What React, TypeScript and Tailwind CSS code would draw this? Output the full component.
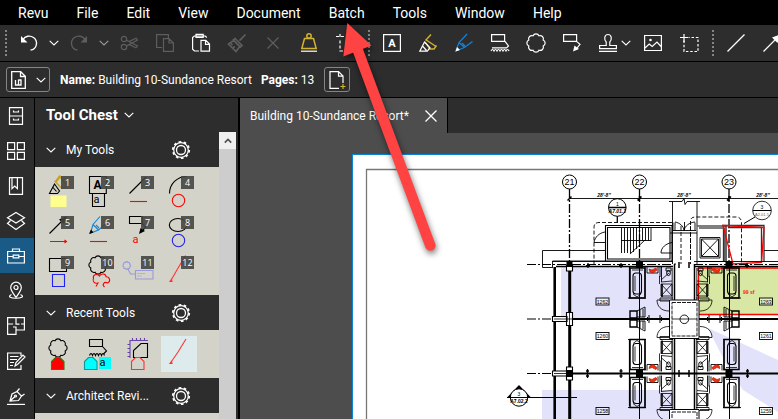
import { useState, type ReactNode } from 'react';

const menus = ['Revu', 'File', 'Edit', 'View', 'Document', 'Batch', 'Tools', 'Window', 'Help'];

// Scalloped outline around a centre point
const cloudPath = (cx: number, cy: number, r: number, n = 8) => {
  const pts = Array.from({ length: n }, (_, i) => {
    const a = (Math.PI * 2 * (i + 0.5)) / n;
    return [cx + r * Math.cos(a), cy + r * Math.sin(a)];
  });
  const bump = r * 0.42;
  return (
    `M${pts[0][0]} ${pts[0][1]}` +
    [...pts.slice(1), pts[0]].map(([x, y]) => `A${bump} ${bump} 0 0 1 ${x} ${y}`).join('') +
    'Z'
  );
};

function Icon({ children, className = '' }: { children: ReactNode; className?: string }) {
  return (
    <svg
      viewBox="0 0 18 18"
      className={`h-[18px] w-[18px] shrink-0 overflow-visible ${className}`}
      fill="none"
      stroke="currentColor"
      strokeWidth="1.2"
      aria-hidden="true"
    >
      {children}
    </svg>
  );
}

function Chevron({ className = '' }: { className?: string }) {
  return (
    <svg viewBox="0 0 10 6" className={`h-[6px] w-[10px] shrink-0 ${className}`} fill="none" stroke="currentColor" aria-hidden="true">
      <path d="M.7.8 5 5 9.3.8" strokeWidth="1.1" />
    </svg>
  );
}

function Grip() {
  return (
    <div className="flex w-[11px] shrink-0 justify-center">
      <div className="h-[26px] border-l-2 border-dotted border-[#858585]" />
    </div>
  );
}

function ToolButton({ label, children, className = 'text-white' }: { label: string; children: ReactNode; className?: string }) {
  return (
    <button type="button" aria-label={label} className={`flex h-9 w-9 shrink-0 items-center justify-center ${className}`}>
      <Icon>{children}</Icon>
    </button>
  );
}

function DropButton({ label, className = 'text-white' }: { label: string; className?: string }) {
  return (
    <button type="button" aria-label={label} className={`flex h-9 w-[14px] shrink-0 items-center justify-center ${className}`}>
      <Chevron />
    </button>
  );
}

function MenuBar() {
  return (
    <nav className="flex h-[25px] shrink-0 items-center bg-black px-1 pt-[1px] text-[14px]">
      {menus.map((menu) => (
        <button key={menu} type="button" className="h-full px-[14px]">
          {menu}
        </button>
      ))}
    </nav>
  );
}

function Toolbar() {
  return (
    <div className="flex h-[37px] shrink-0 items-center overflow-hidden border-b border-black bg-[#2d2d2d]">
      <Grip />
      <ToolButton label="Undo">
        <path d="M3 5.5C5 2 10 1 13.5 3.5 18.5 7 17 15.500 10.500 16.200" strokeWidth="1.3" />
        <path d="M1 2v6.500h6.500z" fill="currentColor" stroke="none" />
      </ToolButton>
      <DropButton label="Undo history" />
      <ToolButton label="Redo" className="text-[#5e5e5e]">
        <path d="M15 5.500C13 2 8 1 4.500 3.500-.5 7 1 15.500 7.500 16.200" strokeWidth="1.3" />
        <path d="M17 2v6.500h-6.500z" fill="currentColor" stroke="none" />
      </ToolButton>
      <DropButton label="Redo history" className="text-[#9a9a9a]" />
      <ToolButton label="Cut" className="text-[#5e5e5e]">
        <circle cx="4" cy="5" r="2.700" />
        <circle cx="4" cy="13" r="2.700" />
        <path d="M6.500 6.200 17.500 12l-1.500 1.800L9 10.500 6.500 12M6.500 12 17.500 6 16 4.200 9 7.600" />
      </ToolButton>
      <ToolButton label="Copy" className="text-[#5e5e5e]">
        <path d="M6 13.500H.6V.6h11.800v4M7.500 4.600h5.500l4.400 4.400v8.400H7.500zM13 4.600V9h4.400" />
      </ToolButton>
      <ToolButton label="Paste">
        <path d="M7 17H2.500L.6 15.200V3.500L2.300 2h10.900l1.600 1.500M4 2V.4h7.200v3H4V2M9 6.300h4.800l3.700 3.800v7H9zM13.500 6.300v4h4" />
      </ToolButton>
      <ToolButton label="Format painter" className="text-[#5e5e5e]">
        <path d="m17.500.5-6 6.200M7 4.500l7 7-1.700 1.500-7-7zM5.500 6.500.5 10l7.500 7.500 3.800-5M3 9.500l1.500 1.500M5 14l1.700-1.700" strokeWidth="1.700" />
      </ToolButton>
      <ToolButton label="Delete" className="text-[#5e5e5e]">
        <path d="m3.500 3.500 11 11M14.500 3.500l-11 11" />
      </ToolButton>
      <ToolButton label="Flatten" className="text-[#d2b42c]">
        <path d="M4.500 4.500h9l2.700 10H1.800z" strokeWidth="1.500" />
        <circle cx="9" cy="2" r="2.200" strokeWidth="1.500" />
        <path d="M1 17.200h16" stroke="#fff" />
      </ToolButton>
      <ToolButton label="Crop">
        <path d="M0 2.500h8M4 0v5M4 6.500v11M4 17h12.500V3H8" strokeDasharray="3 2" />
      </ToolButton>
      <Grip />
      <ToolButton label="Text box">
        <path d="M.6.600h16.800v16.800H.6z" />
        <text x="9" y="13" textAnchor="middle" fontSize="11" fontWeight="700" fill="currentColor" stroke="none">A</text>
      </ToolButton>
      <ToolButton label="Highlight" className="text-[#d2b42c]">
        <path d="M12 .5 6.500 6.500M6.500 5.500l10.500 7M17.500 11.500l-2.500 3.500h-4L6 8" strokeWidth="1.400" />
        <path d="M5.500 8 .8 17.200h7.500l2.700-3.500zM3.500 12l4 4.500" stroke="#fff" />
      </ToolButton>
      <ToolButton label="Pen" className="text-[#1583d8]">
        <path d="M12 0 4 8.500.8 17l8.700-3.500 8-6M4 8.500l5.500 5M7 9l3 3" />
        <path d="m2 13-1.500 4.500L5 16z" fill="#fff" stroke="none" />
      </ToolButton>
      <ToolButton label="Typewriter note">
        <path d="M.6.600h13v6.800H.6zM14 7.400l3.500 4.500-2 2H1" />
        <path d="M0 17q1.500-3 3 0 1.500-3 3 0 1.500-3 3 0 1.500-3 3 0 1.500-3 3 0 1.500-3 3 0" />
      </ToolButton>
      <ToolButton label="Cloud">
        <path d={cloudPath(9, 9, 7.8)} />
      </ToolButton>
      <ToolButton label="Callout">
        <path d="M.6.600h13v6.800H.6zM13.500 7.400l3.500 3-4 5" />
        <path d="m10 17.500 1.500-6 4.500 3.500z" fill="currentColor" stroke="none" />
      </ToolButton>
      <button type="button" aria-label="Stamp" className="flex h-9 w-[45px] shrink-0 items-center gap-1 pl-[9px]">
        <Icon>
          <path d="M7.200 11.500V8C5 6 5 .5 9 .5S13 6 10.800 8v3.500h6.600v3.200H.6v-3.200zM0 17.300h18" />
        </Icon>
        <Chevron />
      </button>
      <ToolButton label="Image">
        <path d="M.6 1.500h16.800v15H.6zM1 14l4.200-4 3 2.500L13 8l4.500 5" />
        <circle cx="6.500" cy="6" r="1.300" fill="currentColor" stroke="none" />
      </ToolButton>
      <ToolButton label="Snapshot">
        <path d="M4 6.500v11h14V3.500H9" strokeDasharray="2.500 1.800" />
        <path d="M0 3.500h8.500M4 0v8" />
      </ToolButton>
      <Grip />
      <ToolButton label="Line">
        <path d="M.5 17.500 17.500.5" />
      </ToolButton>
      <ToolButton label="Arrow">
        <path d="M.5 17.500 15 3" />
        <path d="m18 0-9 3.500 5.500 5.500z" fill="currentColor" stroke="none" />
      </ToolButton>
    </div>
  );
}

function DocumentBar() {
  return (
    <div className="flex h-9 shrink-0 items-center border-b border-black bg-[#2d2d2d] px-[6px] text-[12px]">
      <button type="button" aria-label="Document menu" className="flex h-[25px] w-11 items-center gap-[10px] rounded-[3px] border border-[#858585] pl-1">
        <svg viewBox="0 0 15 18" className="h-[18px] w-[15px]" fill="none" stroke="currentColor" strokeWidth="1.3" aria-hidden="true">
          <path d="M.7.7h9l4.600 4.600v12H.7zM9.500 1v4.500H14" />
          <path d="M4.500 9v5h3V8.500M7.500 14H10V9H7.500" />
        </svg>
        <Chevron />
      </button>
      <p className="ml-[10px] whitespace-nowrap">
        <strong>Name:</strong> Building 10-Sundance Resort
      </p>
      <p className="ml-[9px] whitespace-nowrap">
        <strong>Pages:</strong> 13
      </p>
      <button type="button" aria-label="Add page" className="ml-[10px] flex h-[25px] w-[26px] items-center justify-center rounded-[3px] border border-[#858585]">
        <svg viewBox="0 0 17 18" className="h-[18px] w-[17px]" fill="none" stroke="currentColor" strokeWidth="1.2" aria-hidden="true">
          <path d="M10 17.400H1V.6h8.500L14 5v7M9.500.8V5.200H14" />
          <path d="M14 13v5M11.500 15.500h5" stroke="#d2b42c" />
        </svg>
      </button>
    </div>
  );
}

const railItems = [
  {
    label: 'File Access',
    icon: <path d="M2.500.6h13v16.800h-13zM2.500 9h13M6.500 3.500v1.500h5V3.500M6.500 11.500V13h5v-1.500" />
  },
  {
    label: 'Thumbnails',
    icon: <path d="M.6.600h7v7h-7zM10.400.6h7v7h-7zM.6 10.400h7v7h-7zM10.400 10.400h7v7h-7z" />
  },
  {
    label: 'Bookmarks',
    icon: <path d="M2.500.6h13v16.800h-13zM5 .6v11l2.700-2.500 2.700 2.500V.6" />
  },
  {
    label: 'Layers',
    icon: <path d="m9 .5 8.500 5.300L9 11 .5 5.800zM3.500 8.500.5 11.500 9 17.500l8.500-6-3-3" />
  },
  {
    label: 'Tool Chest',
    icon: <path d="M.6 4.500h16.800v11.500H.6zM5.500 4.500V2h7v2.500M.6 9.500h5.500M11.900 9.500h5.500M6.200 8.200h5.600v2.600H6.200z" />
  },
  {
    label: 'Places',
    icon: (
      <>
        <path d="M9 15.500C6 11 3.700 8.500 3.700 5.500a5.300 5.300 0 0 1 10.600 0C14.300 8.500 12 11 9 15.500z" />
        <circle cx="9" cy="5.500" r="2" />
        <path d="M4.500 12.500C-5 17.500 23 17.500 13.500 12.500" />
      </>
    )
  },
  {
    label: 'Spaces',
    icon: <path d="M.6.600h16.800V13H9v4.400H.6zM.6 7h5.500M9 .6v6.500h3.500M9 13v-3H6M14 7h3.500" />
  },
  {
    label: 'Markups List',
    icon: <path d="M14 4V1H.6v16.400H14V13M3 4.500h8.500M3 7.500h7M3 10.500h4M3 13.500h3M8 14l1-3.500L16 3l2 2-7.500 7.500z" />
  },
  {
    label: 'Signatures',
    icon: (
      <>
        <path d="M3 14 5 7l5-2.500 4.500 4.500-3 4.500zM3 14l5-4.500M9.500 5l3-3.500M14 9.500 17.500 7" />
        <circle cx="8.500" cy="9" r="1" />
        <path d="M0 17.400h18" />
      </>
    )
  }
];

function Rail() {
  return (
    <nav aria-label="Panels" className="flex w-[34px] shrink-0 flex-col bg-[#2d2d2d]">
      {railItems.map(({ label, icon }) => (
        <button
          key={label}
          type="button"
          aria-label={label}
          className={`flex h-[35px] w-full shrink-0 items-center justify-center pr-[2px] ${label === 'Tool Chest' ? 'bg-[#195a87]' : ''}`}
        >
          <Icon>{icon}</Icon>
        </button>
      ))}
    </nav>
  );
}

function Gear() {
  return (
    <svg viewBox="0 0 20 20" className="h-5 w-5" fill="none" stroke="currentColor" aria-hidden="true">
      <circle cx="10" cy="10" r="7.300" strokeWidth="1.200" />
      <circle cx="10" cy="10" r="8.200" strokeWidth="1.800" strokeDasharray="2.576 2.576" />
      <circle cx="10" cy="10" r="4.500" strokeWidth="1.300" />
    </svg>
  );
}

const house = (x: number, y: number) => `M${x} ${y + 12}v-8l4-4h4.500l4 4v8z`;

const myTools = [
  {
    label: 'Yellow highlight',
    art: (
      <>
        <path d="m22 5-5 6M15.500 10l7 7M22.500 17l4.500-1M16 11l4.500-6 6 8" stroke="#c9a21e" strokeWidth="1.300" />
        <path d="m15.500 13-5 9.500h8l2-2.500zM14 16.500l3.500 4" />
        <path d="M11.500 24.500H27.500v11.500h-16z" fill="#ffff8f" stroke="none" />
      </>
    )
  },
  {
    label: 'Text box',
    art: (
      <>
        <path d="M10.500 5.500h16.800v17H10.500zM13.500 22.500h12v13h-12z" />
        <text x="18.500" y="17.500" textAnchor="middle" fontSize="12" fontWeight="700" fill="#000" stroke="none">A</text>
        <text x="14.500" y="32" fontSize="11" fill="#000" stroke="none">a</text>
      </>
    )
  },
  {
    label: 'Line',
    art: (
      <>
        <path d="M10.500 22.500 27 6" />
        <path d="M11 30.500h17" stroke="#f00" />
      </>
    )
  },
  {
    label: 'Arc',
    art: (
      <>
        <path d="M10.500 22.500A17 17 0 0 1 27.500 5.500" />
        <circle cx="19.500" cy="29.500" r="6.200" stroke="#f00" />
      </>
    )
  },
  {
    label: 'Arrow',
    art: (
      <>
        <path d="m10.500 22.500 14-14" />
        <path d="m28 5-8 3.500 5 4.500z" fill="#000" stroke="none" />
        <path d="M11 30.500h16M25.500 29l2 1.500-2 1.500" stroke="#f00" />
      </>
    )
  },
  {
    label: 'Pen',
    art: (
      <>
        <path d="m21 5.500-7 8L11.500 22l8-3 8-7M14 13.500l5.500 5.500M17 14l3 3" stroke="#1583d8" />
        <path d="m12 18.500-2 4.500 4.500-1.500z" fill="#000" stroke="none" />
        <path d="M11 30.500h17" stroke="#f00" />
      </>
    )
  },
  {
    label: 'Callout',
    art: (
      <>
        <path d="M10.500 5.500h13v7h-13zM23.500 12.500l3 4-3 3" />
        <path d="m20 23 1.500-6 4.500 3z" fill="#000" stroke="none" />
        <text x="13.500" y="32" fontSize="11" fill="#f00" stroke="none">a</text>
      </>
    )
  },
  {
    label: 'Ellipse',
    art: (
      <>
        <ellipse cx="19" cy="14" rx="8.700" ry="6.500" />
        <circle cx="19.500" cy="29.500" r="6.200" stroke="#2222f0" />
      </>
    )
  },
  {
    label: 'Rectangle',
    art: (
      <>
        <path d="M10.500 7.500h17v13h-17z" />
        <path d="M13.500 23.500h12v12h-12z" stroke="#2222f0" />
      </>
    )
  },
  {
    label: 'Cloud',
    art: (
      <>
        <path d={cloudPath(19, 14, 7.8)} />
        <path d="M17 35.500l2-3.500c-3.500 1-6-2-4.500-4.500-1-3.500 3-5.500 6-2.500 1.500-3 6.500-2.500 6.500.8 4 0 5 5 1.500 6.200M28.500 32c-3-2-6 1.500-3 4" stroke="#f00" />
      </>
    )
  },
  {
    label: 'Cloud note',
    art: (
      <g stroke="#9a9ade">
        <path d={cloudPath(7.7, 14.5, 3.3)} />
        <path d="m9 18 2.500 5h5M16.500 19.500H34V28H16.500z" />
        <path d="M18.500 22.500h8M18.500 25h4" strokeDasharray="2 .7" strokeWidth=".8" />
      </g>
    )
  },
  {
    label: 'Polyline',
    art: <path d="M26.500 4.500 18.500 18l-6 10.500.5 2h-2l2-3" stroke="#f33" />
  }
];

const recentTools = [
  {
    label: 'Red cloud',
    art: (
      <>
        <path d={cloudPath(19, 14, 7.8)} />
        <path d={house(12.5, 23.5)} fill="#f00" stroke="#37780e" />
      </>
    )
  },
  {
    label: 'Cyan note',
    art: (
      <>
        <path d="M10.500 5.500h13v7h-13zM23.500 12.500l4 4.500-3 3" />
        <path d="M10.500 21.500q1.500-4 3 0 1.500-4 3 0 1.500-4 3 0 1.500-4 3 0 1.500-4 3 0" />
        <path d={house(5.5, 23.5)} fill="#0ff" stroke="#0a9a9a" />
        <path d="M20 23h12v12H20z" fill="#0ff" stroke="none" />
        <text x="20.500" y="32" fontSize="11" fill="#000" stroke="none">a</text>
      </>
    )
  },
  {
    label: 'Area measurement',
    art: (
      <>
        <path d="M11 24V6.500H29M8.500 10.500H11M8.500 14.500H11M8.500 18.500H11M8.500 22.500H11M13.500 4v2.500M17.500 4v2.500M21.500 4v2.500M25.500 4v2.500" stroke="#6842a8" />
        <path d="M14.500 23.500v-7l7.500-7h6.500v14z" />
        <path d={house(12.5, 23.5)} stroke="#f33" />
      </>
    )
  },
  {
    label: 'Polyline',
    art: <path d="M27 5 19 18l-6.500 9.500.5 2h-2l2-3" stroke="#f33" />
  }
];

function ToolCell({ label, art, badge, selected }: { label: string; art: ReactNode; badge?: number; selected?: boolean }) {
  return (
    <button type="button" aria-label={label} className="relative flex h-10 w-10 items-center justify-center">
      {selected && <span className="absolute inset-[2px] bg-[#deebec]" />}
      <svg viewBox="0 0 40 40" className="relative h-10 w-10" fill="none" stroke="#000" strokeWidth="1.100" aria-hidden="true">
        {art}
      </svg>
      {badge && (
        <span className="absolute top-[5px] left-[22px] h-[13px] w-[13px] bg-[#454541]/90 text-center font-['Open_Sans',sans-serif] text-[9px] leading-[13px] text-white">
          <span className="-mx-1">{badge}</span>
        </span>
      )}
    </button>
  );
}

function ToolSection({ title, children }: { title: string; children?: ReactNode }) {
  const [open, setOpen] = useState(true);

  return (
    <section>
      <div className="flex h-[35px] items-center justify-between bg-[#2d2d2d] pr-7 pl-[11px]">
        <button type="button" aria-expanded={open} onClick={() => setOpen(!open)} className="flex items-center gap-[10px] text-[12px]">
          <Chevron className={open ? '' : '-rotate-90'} />
          {title}
        </button>
        <button type="button" aria-label={`${title} settings`}>
          <Gear />
        </button>
      </div>
      {open && <div className="grid min-h-12 grid-cols-[repeat(4,40px)] bg-[#d3d3c9] p-1">{children}</div>}
    </section>
  );
}

function ToolChest() {
  return (
    <aside className="flex w-[206px] shrink-0 flex-col border-r-2 border-l border-black bg-[#2d2d2d]">
      <div className="flex h-[34px] shrink-0 items-center gap-[6px] pl-[11px]">
        <h1 className="text-[15px] font-bold">Tool Chest</h1>
        <Chevron />
      </div>
      <div className="flex min-h-0 flex-1 pr-[2px]">
        <div className="min-w-0 flex-1 overflow-hidden">
          <ToolSection title="My Tools">
            {myTools.map((tool, index) => (
              <ToolCell key={tool.label} label={tool.label} art={tool.art} badge={index + 1} />
            ))}
          </ToolSection>
          <ToolSection title="Recent Tools">
            {recentTools.map((tool, index) => (
              <ToolCell key={tool.label} label={tool.label} art={tool.art} selected={index === 3} />
            ))}
          </ToolSection>
          <ToolSection title="Architect Revi..." />
        </div>
        <div className="w-[17px] bg-[#cdcdcd]">
          <button type="button" aria-label="Scroll up" className="flex h-[17px] w-full items-center justify-center bg-[#f0f0f0] text-[#505050]">
            <svg viewBox="0 0 10 6" className="h-[6px] w-[8px]" fill="none" stroke="currentColor" strokeWidth="2" aria-hidden="true">
              <path d="m1 5 4-4 4 4" />
            </svg>
          </button>
        </div>
      </div>
    </aside>
  );
}

// Guest bathroom, drawn leftwards from the corridor wall and down from the party wall
function Bathroom({ transform }: { transform: string }) {
  return (
    <g transform={transform} fill="none" stroke="#000">
      <path d="M-44 4v30h15V4z" strokeWidth="1.500" />
      <rect x="-41" y="9" width="8.500" height="21" rx="3" strokeWidth="1.100" />
      <path d="M-42 6h11M-39 12v15M-34.500 12v15M-41 30l4 3 4-3" strokeWidth=".8" />
      <path d="M-29 3v30M-27 3v6h11V3M-12.500 2v16M-14 34h13M-14 2v11M-46 34h18" strokeWidth=".9" />
      <path d="M-13 20h11v12h-11zM-13 20l11 12M-13 32-2 20" strokeWidth=".8" />
      <path d="m-13 16 8-7M-13 18l11-1M-14.500 12v8" strokeWidth=".8" />
      <ellipse cx="-5.500" cy="9" rx="1.800" ry="2.600" />
      <path d="M-8 4h5v3h-5z" strokeWidth=".9" />
      <path d="M-12 20v13" strokeWidth="1.600" />
      <path d="M-5 36h-12c0 6 4 11 12 11M-14 34v3h10" strokeWidth=".8" />
      <path d="m-25 5 3 1 4-2 1 2-4 3-3-1z" fill="#f03010" stroke="#c01800" strokeWidth=".7" />
    </g>
  );
}

// Back-to-back wardrobes on the party wall between two rooms
function Wardrobes({ transform }: { transform: string }) {
  return (
    <g transform={transform} fill="none" stroke="#000">
      <path d="M-44-8v7h7v-7zM-44 1v7h7V1z" strokeWidth="1.400" />
      <path d="m-37-8 8-4v10h-8M-37 8l8 4V2h-8M-34-9v7M-31-10v8M-34 9V2M-31 10V2" strokeWidth=".9" />
      <path d="M-25-4v8M-26.500-2v4M-14-4v8M-12.500-2v4" />
    </g>
  );
}

const roomLabels = [
  { x: 602.5, y: 301.5, text: '1262' },
  { x: 602.5, y: 336, text: '1260' },
  { x: 602.5, y: 411, text: '1258' },
  { x: 766, y: 301.5, text: '1263' },
  { x: 766, y: 336, text: '1261' },
  { x: 766, y: 411, text: '1259' }
];

function FloorPlan() {
  return (
    <svg
      viewBox="353 155 425 264"
      preserveAspectRatio="xMinYMin slice"
      className="block h-full w-full font-['Liberation_Sans',sans-serif]"
      fill="none"
      stroke="#000"
      role="img"
      aria-label="Floor plan"
    >
      <path d="M366.500 500V169.500H1200" stroke="#777" strokeWidth="1.300" />

      {/* tinted rooms */}
      <g stroke="none" fill="#e2e2fb">
        <path d="M561 267h112v52H561zM542 390h132v110H542zM708 328l70 32v52l-35-22-16-24z" />
      </g>
      <path d="M698.500 268H900v46.500H698.500z" fill="#d8e8a4" stroke="#f00" strokeWidth="1.300" />

      {/* column grid */}
      <g strokeWidth=".9">
        <path d="M569.500 189v72M639.500 189v76M729 189v76" strokeWidth="1.300" strokeDasharray="9 2 2 2" />
        <path d="M569 198.500H1000" />
        <path d="m567.500 200.500 4-4M637.500 200.500l4-4M727 200.500l4-4M639.500 196v5M729 196v5" strokeWidth="1.500" />
      </g>
      {[['21', 569.5], ['22', 639.5], ['23', 729]].map(([name, x]) => (
        <g key={name}>
          <circle cx={x} cy="182" r="7" fill="#fff" />
          <text x={x} y="185.200" textAnchor="middle" fontSize="9" fill="#000" stroke="none">{name}</text>
        </g>
      ))}
      <g fontSize="5" fontStyle="italic" fontWeight="700" fill="#000" stroke="none" textAnchor="middle">
        <text x="604" y="197">28'-8"</text>
        <text x="684" y="197">28'-8"</text>
        <text x="763" y="197">28'-8"</text>
      </g>

      {/* section markers */}
      <circle cx="617.300" cy="207.500" r="8.800" />
      <path d="M608.500 207.500h17.600M617.300 216.300v6" strokeWidth="1.300" />
      <circle cx="762" cy="210.500" r="9.300" stroke="#333" />
      <path d="M752.700 210.500h18.600M755 217l-11 6.500" />
      <g fill="#000" stroke="none" textAnchor="middle" fontSize="5">
        <text x="617.300" y="205.500">1</text>
        <text x="617.300" y="213" fontWeight="700" fontStyle="italic">A7.01.1</text>
        <text x="762" y="208.500">3</text>
        <text x="762" y="216" fill="#666" fontSize="4">A2.01.5</text>
      </g>
      <path d="M672 222.500h-73q-5 0-5 5V264M676 264h-2M690.500 255v-34q0-4 5-4H736q5.500 0 5.500 6v41M681 226v38M690.500 226v38" strokeWidth=".9" strokeDasharray="4 2" />

      {/* stair core */}
      <path d="M605.500 225.500H672v35.500h-66.500zM607.500 227.500H670v31.500h-62.500z" strokeWidth="1.100" />
      <path d="M621.500 228v25M624.500 228v25M627.500 228v25M630.500 228v25M633.500 228v24M636.500 228v21M639.500 228v18M642.500 228v13M645.500 228v13M648.500 228v13M651 228v13M621 240.500h30M630 254l15-14" strokeWidth=".9" />
      <path d="M605 232c-6 1-10 5-11 10.500h11M672 242.500c-6 1-11 5-11 10.500h11" strokeWidth=".9" />

      {/* lobby */}
      <path d="M672.500 201.500V264M697 201.500V264M669 201.500h13l2-3 1 6 2-3h13M673 222.500v8M695 222.500v8M673 230.500h23M675 222.500v8M684.500 222v8.500M675 222c5 1 8.500 4 9 8.500 1-4.500 5-8 11-8.500M670 233h27" strokeWidth=".9" />
      <path d="M697.500 226H726M699 228h25v33M697.500 261.500h30M726 226v35" strokeWidth="1.200" />
      <path d="M700 237.500h20V258h-20zM701.500 239h17v17.500h-17zM701.500 239l17 17.500M718.500 239l-17 17.500" strokeWidth=".9" />
      <path d="M722 225.500h42V262M728 227.500h33.500V262M723.500 226v35" strokeWidth="1.300" stroke="#333" />
      <path d="m723 225.500 41 2-2.500 35L733 264z" stroke="#f00" strokeWidth="1.300" />

      {/* slab edges */}
      <path d="M605 250.500h-62.500v17H553M764 250.500H1000M605 261H552.500v6M552.500 261.500H673M694 261.500H1000" strokeWidth=".9" />
      <path d="M556 266.500h117M694 266.500H1000" strokeWidth="1.300" />
      <path d="M527 264.500h146M694 264.500H1000M527 319h24M527 373.500h24" strokeDasharray="9 2 2 2" strokeWidth="1.100" />
      <path d="M588 263v5M621 263v5M586 265.500h4M619 265.500h4M747 263v5M745 265.500h4" strokeWidth="1.200" />

      {/* outer walls and party walls */}
      <path d="M554.700 267V500" strokeWidth="2.600" />
      <path d="M569.700 266V500" strokeWidth="3" />
      <path d="M639.500 264V500M729.500 264V500" strokeWidth="1" />
      <path d="M572 319h98M699 319H1000M572 373.500H1000" strokeWidth="2" />
      <g fill="#fff" strokeWidth="1.100">
        <path d="M552.500 316.500H567v5h-14.500zM552.500 371H567v5h-14.500zM566.500 312.500h6v13h-6zM566.500 367h6v13h-6zM566.500 265h6v6h-6z" />
      </g>
      <path d="M554 319h12M554 373.500h12M569.500 312v14M567 319h5" strokeWidth=".8" />
      <path d="M566.500 261h6v6h-6zM636 261h7v7h-7zM725.500 261h7v7h-7zM566.500 370h6v7h-6zM636 370h7v7h-7zM725.500 370h7v7h-7z" fill="#000" stroke="none" />
      <path d="M587.500 369v9M621 369v9M586 371h3M586 376h3M619.500 371h3M619.500 376h3M747.500 369v9M746 371h3M746 376h3" strokeWidth="1.300" />
      <path d="M629.500 267v31.500M629.500 340v66" strokeWidth="1.200" />

      {/* guest corridor */}
      <path d="M674.500 264V500M694.500 264V500" strokeWidth="1.500" />
      <path d="M672.200 268V500M696.800 268V500" strokeWidth=".8" />
      <Bathroom transform="translate(674 264)" />
      <Bathroom transform="translate(674 373.500) scale(1 -1)" />
      <Bathroom transform="translate(674 373.500)" />
      <Bathroom transform="translate(695 264) scale(-1 1)" />
      <Bathroom transform="translate(695 373.500) scale(-1 -1)" />
      <Bathroom transform="translate(695 373.500) scale(-1 1)" />
      <Wardrobes transform="translate(674 319)" />
      <Wardrobes transform="translate(695 319) scale(-1 1)" />
      <path d="M669.500 300h29.500v38.500h-29.500zM669.500 409.500h29.500V500h-29.500z" fill="#fff" />
      <path d="M672 302.500h25V336h-25zM672 412h25v88h-25z" strokeWidth=".9" strokeDasharray="4 1" />
      <circle cx="684.300" cy="319.300" r="4.300" strokeWidth=".9" />
      <path d="M672 319h17M689 319h8" strokeWidth=".8" />
      <path d="M679 370v7M689 370v7M679 262v6M689 262v6" strokeWidth="1.500" />

      {/* room numbers */}
      {roomLabels.map(({ x, y, text }) => (
        <g key={text}>
          <rect x={x - 6.5} y={y - 3.5} width="13" height="7" fill="#fff" fillOpacity=".4" strokeWidth=".9" />
          <text x={x} y={y + 2} textAnchor="middle" fontSize="5.200" fill="#000" stroke="none">{text}</text>
        </g>
      ))}
      <text x="743" y="294" fontSize="5" fontWeight="700" fill="#f02020" stroke="none">99 sf</text>

      {/* elevation marker */}
      <path d="M507 397.500 519 385l12 12.500z" fill="#000" stroke="none" />
      <circle cx="519" cy="397.500" r="8.700" fill="#fff" />
      <path d="M507 397.500h70" strokeWidth="1.200" />
      <g fill="#000" stroke="none" textAnchor="middle" fontSize="5">
        <text x="519" y="395.500">3</text>
        <text x="519" y="403" fontWeight="700">A7.02.2</text>
      </g>
    </svg>
  );
}

function Workspace() {
  return (
    <main className="flex min-w-0 flex-1 flex-col bg-[#4d4d4d]">
      <div className="flex h-[35px] shrink-0 bg-[#2d2d2d]">
        <div className="flex items-center border-r border-black bg-[#4d4d4d] px-[10px] text-[12px]">
          <span className="whitespace-nowrap">Building 10-Sundance Resort*</span>
          <button type="button" aria-label="Close tab" className="ml-4">
            <svg viewBox="0 0 12 12" className="h-3 w-3" fill="none" stroke="currentColor" strokeWidth="1.300" aria-hidden="true">
              <path d="m.5.5 11 11M11.500.5l-11 11" />
            </svg>
          </button>
        </div>
      </div>
      <div className="mt-[21px] ml-[112px] min-h-0 flex-1 overflow-hidden border-t border-l border-[#0b84d6] bg-white">
        <FloorPlan />
      </div>
    </main>
  );
}

function PointerArrow() {
  return (
    <svg
      viewBox="0 0 110 240"
      className="pointer-events-none absolute top-5 left-[335px] h-[240px] w-[110px] drop-shadow-[1px_3px_3px_rgba(0,0,0,0.55)]"
      aria-hidden="true"
    >
      <path d="M22 28 95.300 225.500" stroke="#ff4343" strokeWidth="10.500" strokeLinecap="round" />
      <path d="M12.300 3 8.300 36.500 36.500 25.500z" fill="#ff4343" />
    </svg>
  );
}

export default function App() {
  return (
    <div className="relative flex h-screen flex-col overflow-hidden bg-[#2d2d2d] font-[Roboto,sans-serif] text-white">
      <MenuBar />
      <Toolbar />
      <DocumentBar />
      <div className="flex min-h-0 flex-1">
        <Rail />
        <ToolChest />
        <Workspace />
      </div>
      <PointerArrow />
    </div>
  );
}
